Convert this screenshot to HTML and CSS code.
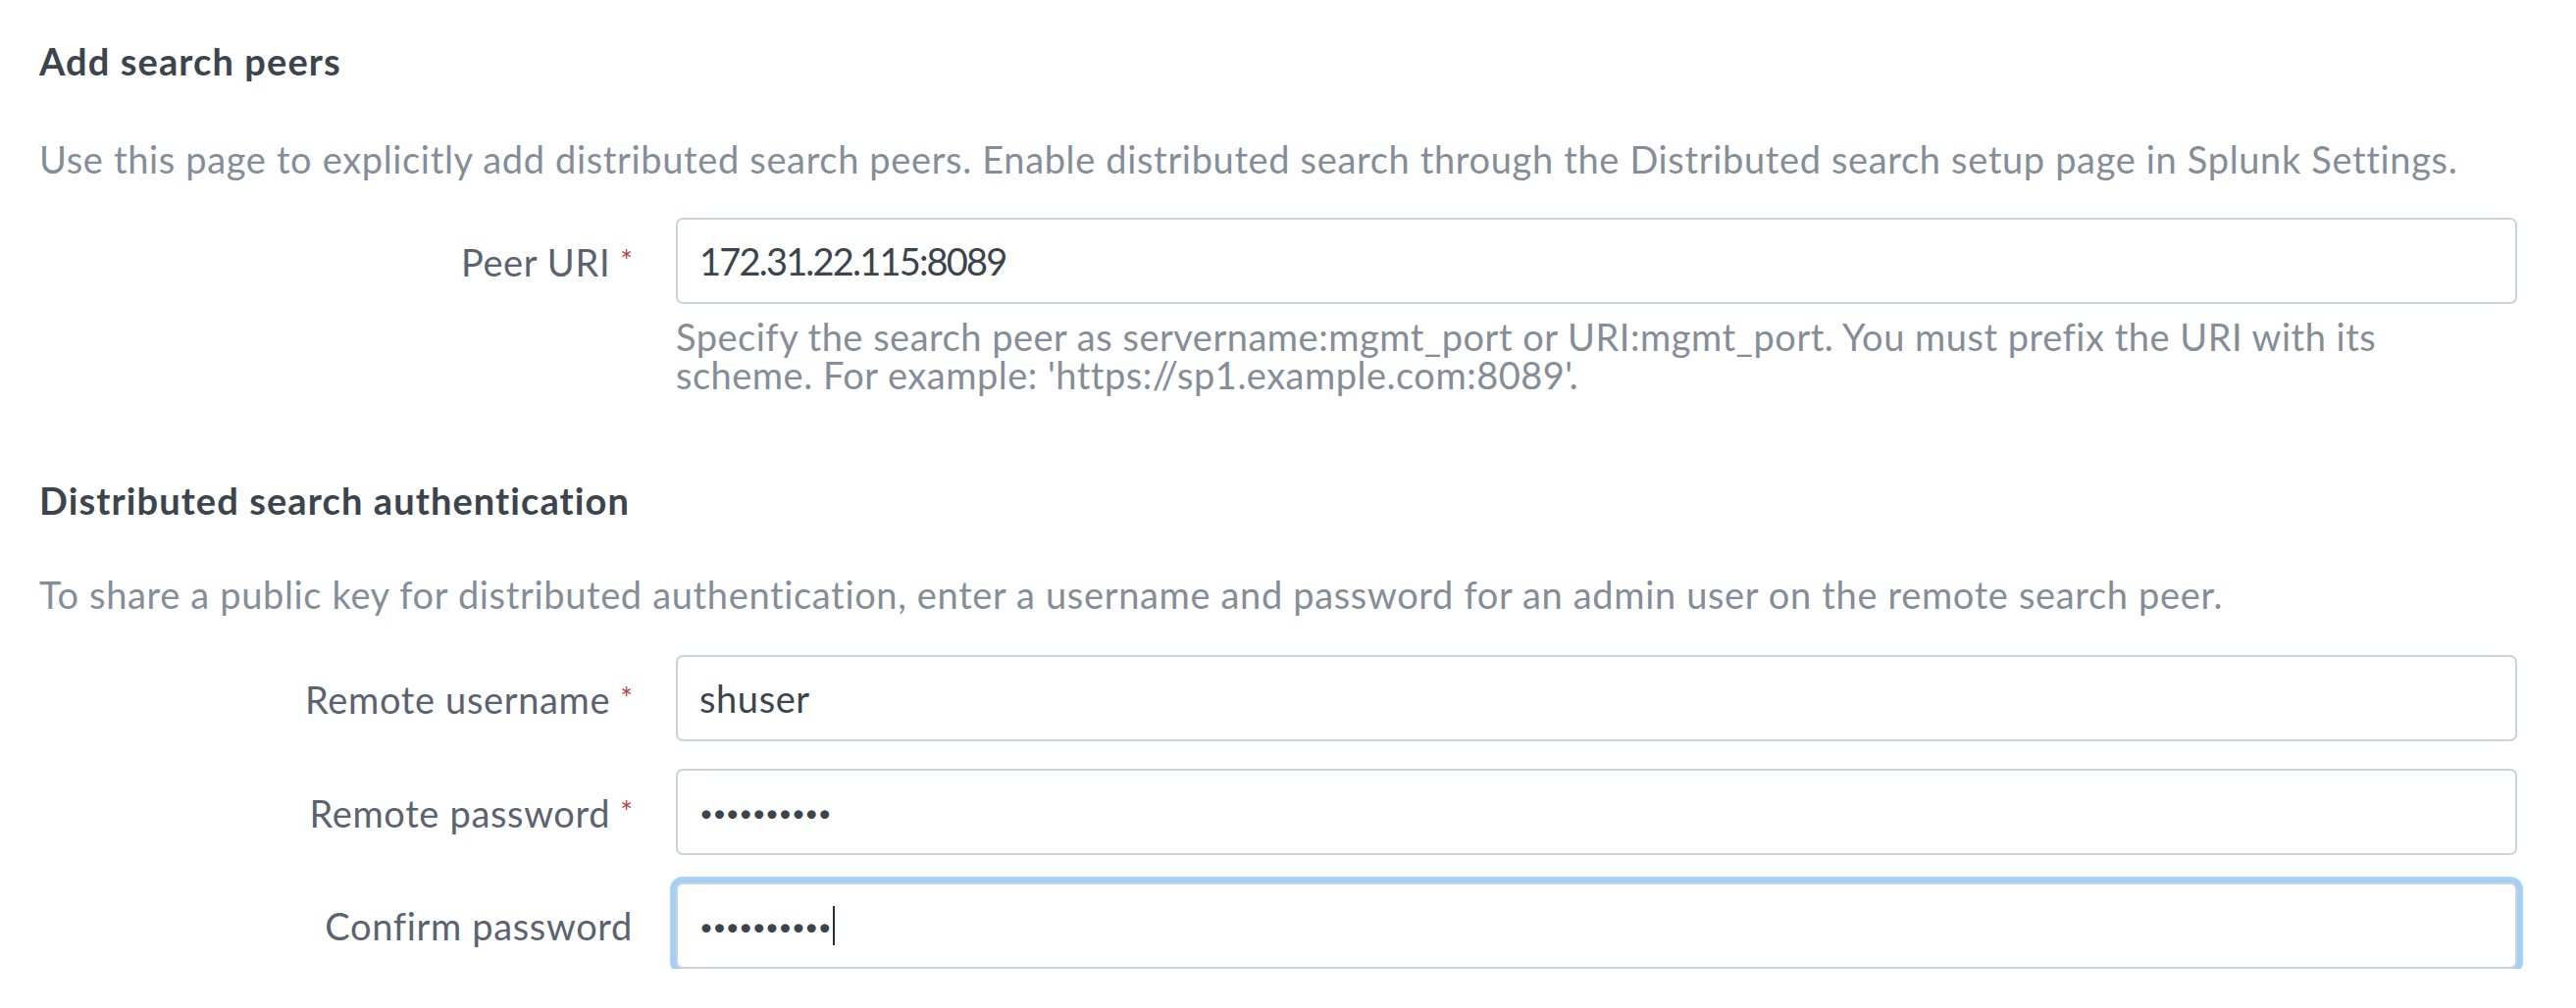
FILE: index.html
```html
<!DOCTYPE html>
<html lang="en">
<head>
<meta charset="utf-8">
<title>Add search peers</title>
<link rel="stylesheet" href="styles.css">
</head>
<body>
<main class="page">
  <section class="section">
    <h2 class="section-title">Add search peers</h2>
    <p class="section-desc">Use this page to explicitly add distributed search peers. Enable distributed search through the Distributed search setup page in Splunk Settings.</p>
    <div class="field">
      <label class="field-label"><span class="label-text">Peer URI<span class="req">*</span></span></label>
      <div class="field-control">
        <div class="input"><span class="value value-numeric">172.31.22.115:8089</span></div>
        <p class="help">Specify the search peer as servername:mgmt_port or URI:mgmt_port. You must prefix the URI with its<br>scheme. For example: 'https://sp1.example.com:8089'.</p>
      </div>
    </div>
  </section>

  <section class="section section-auth">
    <h2 class="section-title">Distributed search authentication</h2>
    <p class="section-desc">To share a public key for distributed authentication, enter a username and password for an admin user on the remote search peer.</p>
    <div class="field-list">
      <div class="field">
        <label class="field-label"><span class="label-text">Remote username<span class="req">*</span></span></label>
        <div class="field-control">
          <div class="input"><span class="value">shuser</span></div>
        </div>
      </div>
      <div class="field">
        <label class="field-label"><span class="label-text">Remote password<span class="req">*</span></span></label>
        <div class="field-control">
          <div class="input"><span class="dots">••••••••••</span></div>
        </div>
      </div>
      <div class="field">
        <label class="field-label"><span class="label-text">Confirm password</span></label>
        <div class="field-control">
          <div class="input input-focused"><span class="dots">••••••••••</span><span class="caret"></span></div>
        </div>
      </div>
    </div>
  </section>
</main>
</body>
</html>
```

FILE: styles.css
```css
html, body {
  margin: 0;
  background: #ffffff;
}

body {
  font-family: Lato, "Open Sans", "Liberation Sans", sans-serif;
  color: #3c444d;
}

.page {
  padding: 40px 60px 0 40px;
}

.section-title {
  margin: 0;
  font-size: 38px;
  font-weight: 700;
  letter-spacing: 1.1px;
  line-height: 44px;
  color: #3c444d;
}

.section-desc {
  margin: 56px 0 0;
  font-size: 38px;
  letter-spacing: 0.65px;
  line-height: 44px;
  color: #858e98;
}

.section-auth .section-title {
  margin-top: 86px;
}

.section-auth .section-desc {
  margin-top: 52px;
}

.field {
  display: grid;
  grid-template-columns: 605px 1fr;
  column-gap: 44px;
  margin-top: 38px;
}

.field-list {
  display: flex;
  flex-direction: column;
  gap: 28px;
  margin-top: 40px;
}

.field-list .field {
  margin-top: 0;
}

.field-label {
  height: 88px;
  display: flex;
  align-items: center;
  justify-content: flex-end;
  font-size: 38px;
  letter-spacing: 0.65px;
  color: #5c6370;
}

.label-text {
  line-height: 44px;
}

.req {
  margin-left: 10px;
  font-size: 30px;
  letter-spacing: 0;
  vertical-align: 5px;
  color: #b9473f;
}

.input {
  height: 88px;
  box-sizing: border-box;
  border: 2px solid #cdd3da;
  border-radius: 7px;
  padding: 0 22px;
  display: flex;
  align-items: center;
  font-size: 38px;
  color: #3c444d;
  background: #ffffff;
}

.value {
  letter-spacing: 0.6px;
}

.value-numeric {
  letter-spacing: -1.8px;
}

.input-focused {
  box-shadow: 0 0 1px 6px rgba(150, 199, 243, 0.85);
}

.dots {
  font-size: 24px;
  letter-spacing: -0.5px;
  color: #3c444d;
}

.caret {
  width: 2px;
  height: 40px;
  background: #2b3036;
  margin-left: 2px;
}

.help {
  margin: 14px 0 0;
  font-size: 38px;
  letter-spacing: 0.5px;
  line-height: 39px;
  color: #858e98;
}
```
